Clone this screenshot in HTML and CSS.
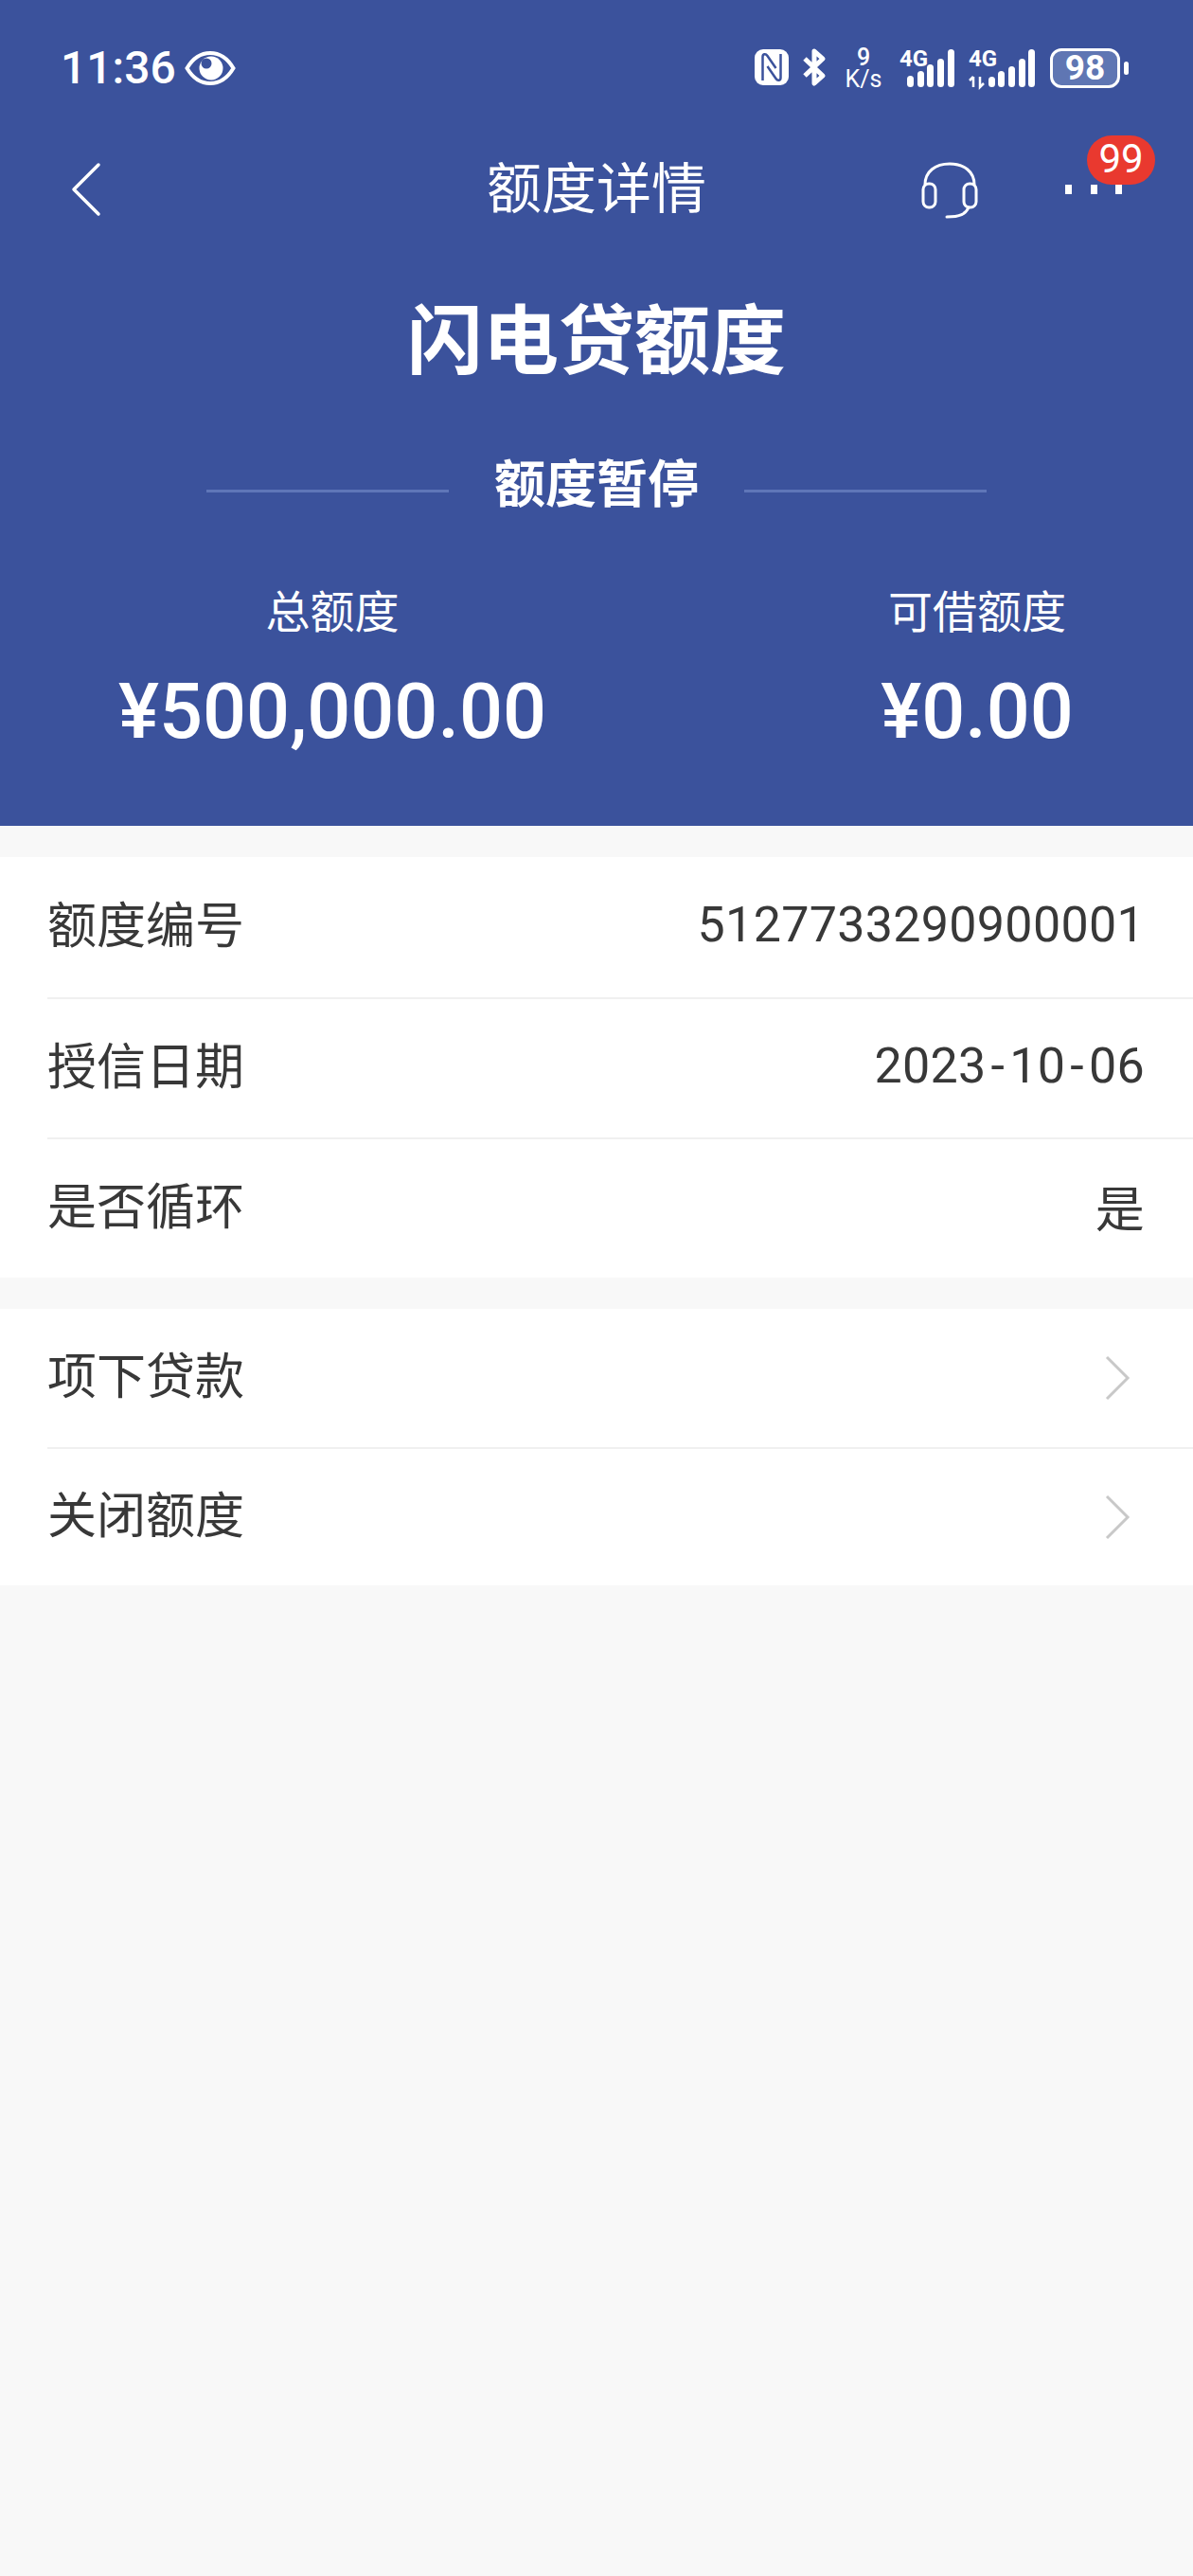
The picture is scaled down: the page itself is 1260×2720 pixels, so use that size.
FILE: index.html
```html
<!DOCTYPE html>
<html lang="zh-CN">
<head>
    <meta charset="UTF-8">
    <meta name="viewport" content="width=device-width, initial-scale=1.0">
    <title>额度详情</title>
    <link rel="stylesheet" href="styles.css">
</head>
<body>
    <header class="hero">
        <div class="status-bar">
            <div class="status-left">
                <span class="clock">11:36</span>
                <svg class="icon-eye" viewBox="0 0 54 38">
                    <path d="M2.500 19C9 8 17 3 27 3s18 5 24.500 16C45 30 37 35 27 35S9 30 2.500 19Z" fill="none" stroke="#fff" stroke-width="4"/>
                    <circle cx="28" cy="19" r="12.500" fill="#fff"/>
                    <circle cx="23" cy="14" r="5.500" fill="#3b529c"/>
                </svg>
            </div>
            <div class="status-right">
                <svg class="icon-nfc" viewBox="0 0 36 38">
                    <rect width="36" height="38" rx="9" fill="#fff"/>
                    <path d="M8.500 33V8c0-3 3-4 5-1l9 13" fill="none" stroke="#3b529c" stroke-width="2.500"/>
                    <path d="M27.500 5v25c0 3-3 4-5 1l-9-13" fill="none" stroke="#3b529c" stroke-width="2.500"/>
                </svg>
                <svg class="icon-bt" viewBox="0 0 24 38">
                    <path d="M2 10l19 18-9 8V2l9 8L2 28" fill="none" stroke="#fff" stroke-width="5" stroke-linejoin="round"/>
                </svg>
                <div class="speed"><span>9</span><span class="speed-unit">K/s</span></div>
                <svg class="icon-signal-a" viewBox="0 0 58 40">
                    <text x="0" y="18" class="sig-text">4G</text>
                    <rect x="8" y="28" width="7" height="12" rx="3.500" fill="#fff"/>
                    <rect x="19" y="23" width="7" height="17" rx="3.500" fill="#fff"/>
                    <rect x="29" y="16" width="7" height="24" rx="3.500" fill="#fff"/>
                    <rect x="40" y="10" width="7" height="30" rx="3.500" fill="#fff"/>
                    <rect x="51" y="0" width="7" height="40" rx="3.500" fill="#fff"/>
                </svg>
                <svg class="icon-signal-b" viewBox="0 0 70 40">
                    <text x="0" y="18" class="sig-text">4G</text>
                    <path d="M5 40V29M1 33l4-4M12 29v11l4-4" fill="none" stroke="#fff" stroke-width="2.500"/>
                    <rect x="21" y="29" width="7" height="11" rx="3.500" fill="#fff"/>
                    <rect x="31" y="23" width="7" height="17" rx="3.500" fill="#fff"/>
                    <rect x="42" y="18" width="7" height="22" rx="3.500" fill="#fff"/>
                    <rect x="53" y="10" width="7" height="30" rx="3.500" fill="#fff"/>
                    <rect x="63" y="0" width="7" height="40" rx="3.500" fill="#fff"/>
                </svg>
                <div class="battery">
                    <div class="battery-body">98</div>
                    <div class="battery-nub"></div>
                </div>
            </div>
        </div>

        <nav class="nav">
            <svg class="icon-back" viewBox="0 0 32 58">
                <path d="M29 3L3 29l26 26" fill="none" stroke="#fff" stroke-width="3.500" stroke-linecap="round" stroke-linejoin="round"/>
            </svg>
            <div class="nav-title">额度详情</div>
            <div class="nav-actions">
                <svg class="icon-headset" viewBox="0 0 60 60">
                    <path d="M4 24C4 10 15 2 30 2s26 8 26 22" fill="none" stroke="#fff" stroke-width="3"/>
                    <rect x="2" y="23" width="13" height="25" rx="6" fill="none" stroke="#fff" stroke-width="3"/>
                    <rect x="45" y="23" width="13" height="25" rx="6" fill="none" stroke="#fff" stroke-width="3"/>
                    <path d="M50 48c-3 7-9 10-23 10" fill="none" stroke="#fff" stroke-width="3" stroke-linecap="round"/>
                </svg>
                <div class="more">
                    <i></i><i></i><i></i>
                    <span class="badge">99</span>
                </div>
            </div>
        </nav>

        <h1 class="product">闪电贷额度</h1>

        <div class="state">
            <span class="state-line"></span>
            <span class="state-text">额度暂停</span>
            <span class="state-line"></span>
        </div>

        <div class="amounts">
            <div class="amount">
                <div class="amount-label">总额度</div>
                <div class="amount-value">¥500,000.00</div>
            </div>
            <div class="amount">
                <div class="amount-label">可借额度</div>
                <div class="amount-value">¥0.00</div>
            </div>
        </div>
    </header>

    <section class="group group-info">
        <div class="row"><span>额度编号</span><span class="row-value">5127733290900001</span></div>
        <div class="row"><span>授信日期</span><span class="row-value">2023<span class="dash">-</span>10<span class="dash">-</span>06</span></div>
        <div class="row"><span>是否循环</span><span class="row-value">是</span></div>
    </section>

    <section class="group group-links">
        <div class="row">
            <span>项下贷款</span>
            <svg class="icon-arrow" viewBox="0 0 26 48"><path d="M2 2l22 22L2 46" fill="none" stroke="#c8c8c8" stroke-width="3"/></svg>
        </div>
        <div class="row">
            <span>关闭额度</span>
            <svg class="icon-arrow" viewBox="0 0 26 48"><path d="M2 2l22 22L2 46" fill="none" stroke="#c8c8c8" stroke-width="3"/></svg>
        </div>
    </section>
</body>
</html>
```

FILE: styles.css
```css
* {
    box-sizing: border-box;
}

body {
    margin: 0;
    min-height: 2720px;
    background-color: #f8f8f8;
    color: #383838;
    font-family: Roboto, "Noto Sans CJK SC", sans-serif;
}

svg {
    overflow: visible;
}

.hero {
    height: 872px;
    background-color: #3b529c;
    color: #fff;
}

/* status bar */
.status-bar {
    height: 140px;
    padding: 50px 68px 0 64px;
    display: flex;
    justify-content: space-between;
    align-items: flex-start;
}

.status-left {
    display: flex;
    align-items: center;
    gap: 9px;
}

.clock {
    font-size: 48px;
    font-weight: 500;
    line-height: 44px;
}

.icon-eye {
    width: 54px;
    height: 38px;
}

.status-right {
    display: flex;
    align-items: flex-start;
    margin-top: 2px;
}

.icon-nfc {
    width: 36px;
    height: 38px;
}

.icon-bt {
    width: 24px;
    height: 38px;
    margin-left: 15px;
}

.speed {
    width: 44px;
    margin-left: 18px;
    margin-top: -3px;
    display: flex;
    flex-direction: column;
    align-items: center;
    font-size: 25px;
    line-height: 23px;
    font-weight: 500;
}

.speed-unit {
    font-weight: 400;
}

.icon-signal-a {
    width: 58px;
    height: 40px;
    margin-left: 16px;
}

.icon-signal-b {
    width: 70px;
    height: 40px;
    margin-left: 15px;
}

.sig-text {
    font-size: 24px;
    font-weight: 700;
    fill: #fff;
}

.battery {
    display: flex;
    align-items: center;
    margin-left: 16px;
    margin-top: -1px;
}

.battery-body {
    width: 74px;
    height: 42px;
    border: 3px solid #fff;
    border-radius: 12px;
    background-color: #5f76b3;
    font-size: 37px;
    font-weight: 700;
    line-height: 36px;
    text-align: center;
}

.battery-nub {
    width: 5px;
    height: 14px;
    margin-left: 4px;
    border-radius: 3px;
    background-color: #fff;
}

/* nav */
.nav {
    height: 120px;
    padding: 0 39px;
    display: grid;
    grid-template-columns: 1fr auto 1fr;
    align-items: center;
}

.icon-back {
    width: 32px;
    height: 58px;
    margin-left: 36px;
}

.nav-title {
    font-size: 58px;
    line-height: 70px;
}

.nav-actions {
    display: flex;
    justify-content: flex-end;
    align-items: center;
    gap: 92px;
}

.icon-headset {
    width: 60px;
    height: 60px;
    margin-top: 2px;
}

.more {
    position: relative;
    width: 60px;
    display: flex;
    justify-content: space-between;
    margin-right: 36px;
}

.more i {
    width: 7px;
    height: 10px;
    background-color: #fff;
}

.badge {
    position: absolute;
    left: 23px;
    top: -52px;
    width: 72px;
    height: 52px;
    border-radius: 26px;
    background-color: #e9392f;
    font-size: 42px;
    line-height: 50px;
    text-align: center;
}

/* summary */
.product {
    margin: 0;
    height: 80px;
    margin-top: 61px;
    font-size: 80px;
    font-weight: 700;
    line-height: 80px;
    text-align: center;
}

.state {
    margin-top: 82px;
    display: flex;
    justify-content: center;
    align-items: center;
    gap: 48px;
}

.state-line {
    width: 256px;
    height: 3px;
    margin-top: 10px;
    background-color: #5f76b8;
}

.state-text {
    width: 216px;
    font-size: 54px;
    font-weight: 700;
    line-height: 60px;
    text-align: center;
}

.amounts {
    margin-top: 74px;
    display: grid;
    grid-template-columns: 702px 456px;
    gap: 102px;
}

.amount {
    text-align: center;
}

.amount-label {
    font-size: 47px;
    line-height: 60px;
}

.amount-value {
    margin-top: 27px;
    font-size: 81px;
    font-weight: 500;
    line-height: 96px;
}

/* lists */
.group {
    margin-top: 33px;
    background-color: #fff;
}

.row {
    margin-left: 50px;
    padding-right: 51px;
    padding-bottom: 11px;
    display: flex;
    justify-content: space-between;
    align-items: center;
    font-size: 52px;
    border-top: 2px solid #f0f0f0;
}

.row:first-child {
    border-top: none;
}

.row-value {
    margin-top: 5px;
    letter-spacing: 0.3px;
}

.dash {
    padding: 0 5px;
}

.group-info .row {
    height: 148px;
}

.group-links .row {
    height: 146px;
}

.icon-arrow {
    width: 26px;
    height: 48px;
    margin-right: 16px;
    margin-top: 11px;
}
```
